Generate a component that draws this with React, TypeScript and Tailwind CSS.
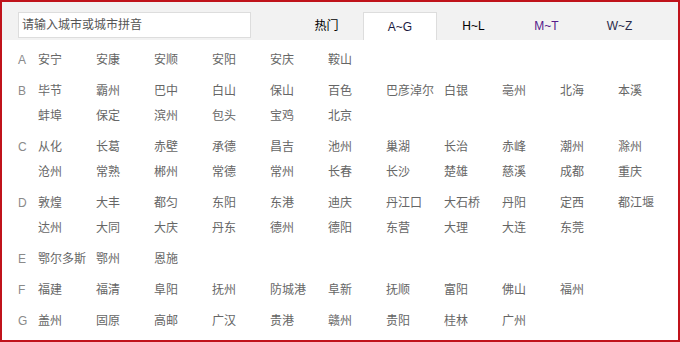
import React from "react";

const groups: [string, string[]][] = [
  ["A", ["安宁", "安康", "安顺", "安阳", "安庆", "鞍山"]],
  ["B", ["毕节", "霸州", "巴中", "白山", "保山", "百色", "巴彦淖尔", "白银", "亳州", "北海", "本溪", "蚌埠", "保定", "滨州", "包头", "宝鸡", "北京"]],
  ["C", ["从化", "长葛", "赤壁", "承德", "昌吉", "池州", "巢湖", "长治", "赤峰", "潮州", "滁州", "沧州", "常熟", "郴州", "常德", "常州", "长春", "长沙", "楚雄", "慈溪", "成都", "重庆"]],
  ["D", ["敦煌", "大丰", "都匀", "东阳", "东港", "迪庆", "丹江口", "大石桥", "丹阳", "定西", "都江堰", "达州", "大同", "大庆", "丹东", "德州", "德阳", "东营", "大理", "大连", "东莞"]],
  ["E", ["鄂尔多斯", "鄂州", "恩施"]],
  ["F", ["福建", "福清", "阜阳", "抚州", "防城港", "阜新", "抚顺", "富阳", "佛山", "福州"]],
  ["G", ["盖州", "固原", "高邮", "广汉", "贵港", "赣州", "贵阳", "桂林", "广州"]],
];

export default function App() {
  return (
    <div className="w-[680px] h-[342px] border-2 border-[#c0131b] bg-white text-[12px] font-['Liberation_Sans','Noto_Sans_CJK_SC',sans-serif] overflow-hidden">
      <div className="flex items-start h-[38px] bg-[#f2f2f2] pl-4 pt-[10px]">
        <input
          className="w-[233px] h-[26px] border border-[#dddddd] bg-white pl-[3px] text-[12px] outline-none placeholder:text-[#555]"
          placeholder="请输入城市或城市拼音"
        />
        <div className="flex ml-[39px]">
          <div className="w-[73px] h-[28px] flex items-center justify-center text-black">热门</div>
          <div className="w-[74px] h-[28px] flex items-center justify-center bg-white border border-b-0 border-[#dddddd] text-[#1a1a40]">A~G</div>
          <div className="w-[73px] h-[28px] flex items-center justify-center text-black">H~L</div>
          <div className="w-[73px] h-[28px] flex items-center justify-center text-[#551a8b]">M~T</div>
          <div className="w-[73px] h-[28px] flex items-center justify-center text-[#2a2a4a]">W~Z</div>
        </div>
      </div>
      <div className="flex flex-col gap-[6px] pt-[8px] pl-4">
        {groups.map(([letter, cities]) => (
          <div key={letter} className="flex">
            <div className="w-[20px] h-[25px] leading-[25px] text-[#8a8a8a]">{letter}</div>
            <div className="grid grid-cols-[repeat(11,58px)] auto-rows-[25px]">
              {cities.map((c) => (
                <div key={c} className="leading-[25px] text-[#666] whitespace-nowrap">{c}</div>
              ))}
            </div>
          </div>
        ))}
      </div>
    </div>
  );
}
